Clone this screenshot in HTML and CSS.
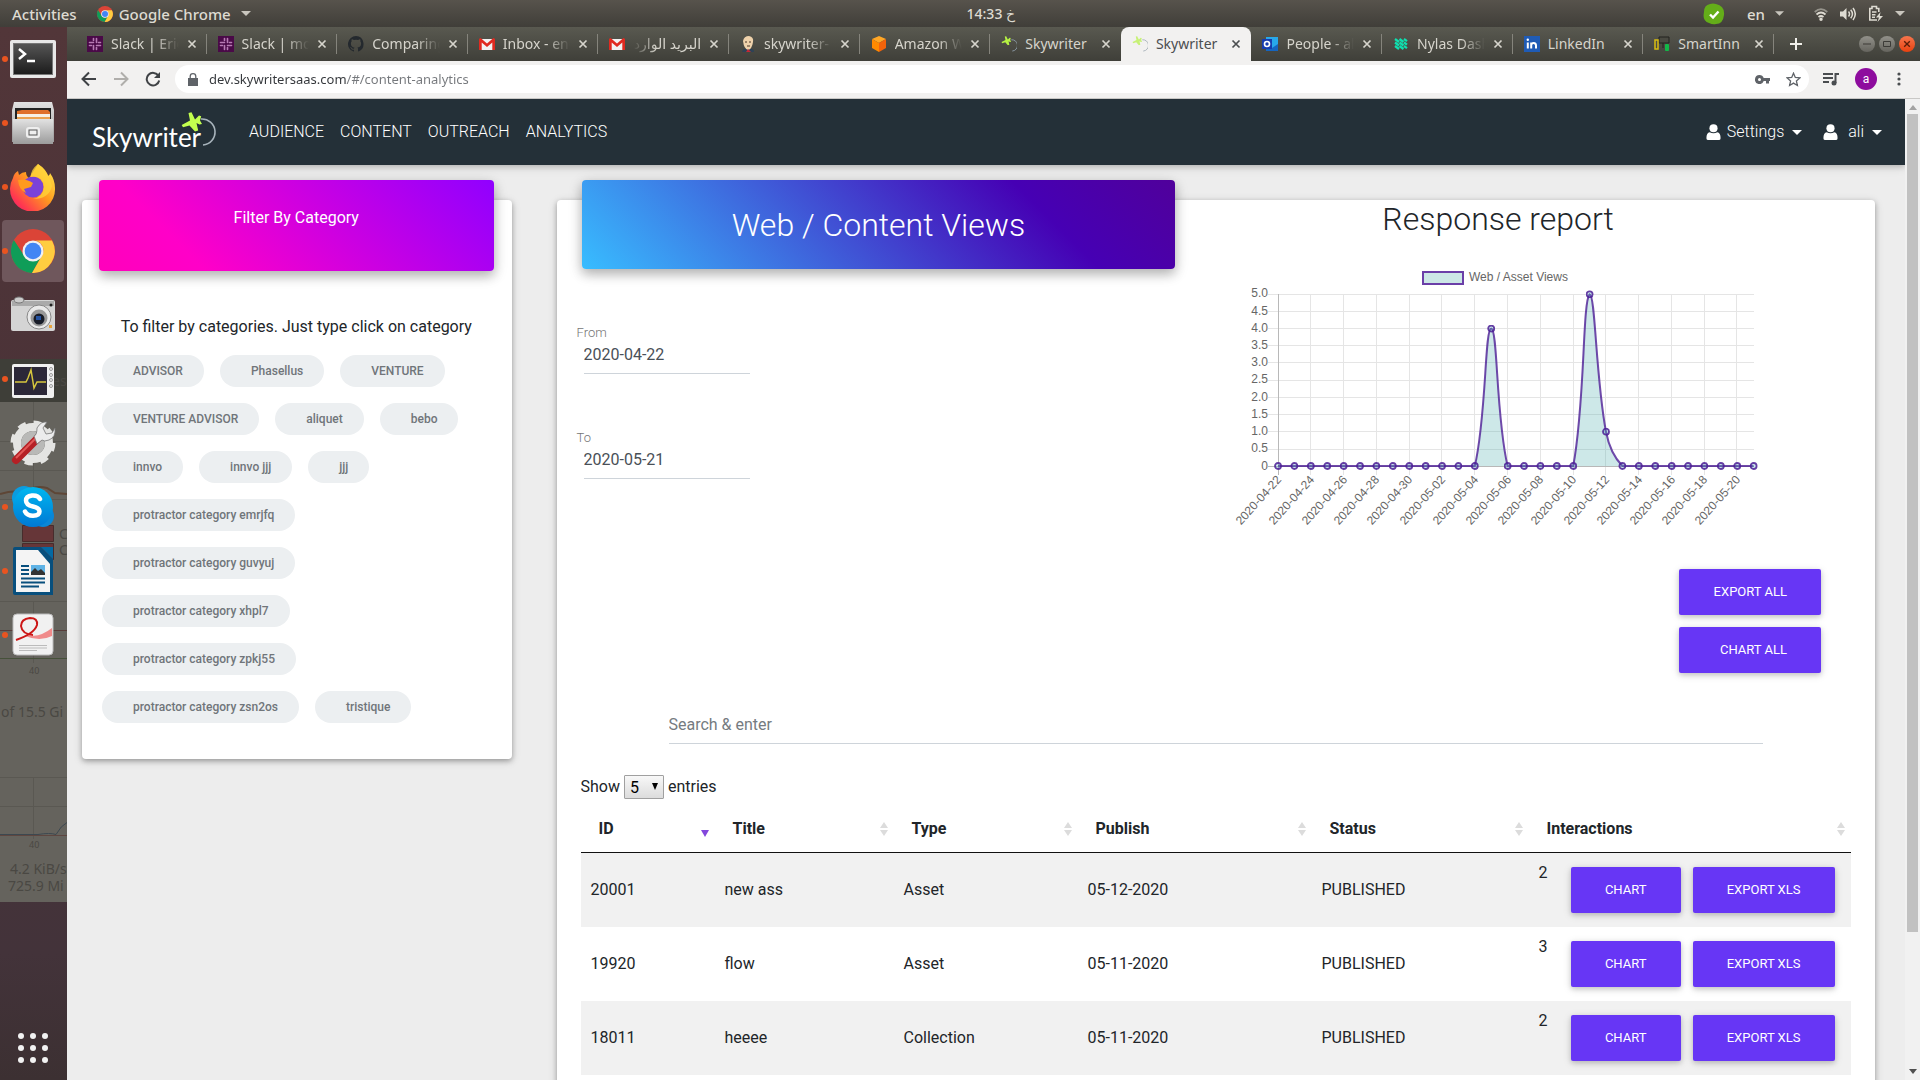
FILE: index.html
```html
<!DOCTYPE html>
<html lang="en">
<head>
<meta charset="utf-8">
<title>Skywriter</title>
<link rel="stylesheet" href="styles.css">
</head>
<body>
<svg class="defs" aria-hidden="true">
  <defs>
    <linearGradient id="g-metal" x1="0" y1="0" x2="0" y2="1"><stop offset="0" stop-color="#e2e2e2"/><stop offset="1" stop-color="#9b9b9b"/></linearGradient>
    <linearGradient id="g-screen" x1="0" y1="0" x2="0" y2="1"><stop offset="0" stop-color="#555"/><stop offset="1" stop-color="#1c1c1c"/></linearGradient>
    <linearGradient id="g-fox" x1="1" y1="0" x2="0" y2="1"><stop offset="0" stop-color="#fff44f"/><stop offset=".45" stop-color="#ff9a1f"/><stop offset=".8" stop-color="#ff3750"/><stop offset="1" stop-color="#e5177b"/></linearGradient>
    <linearGradient id="g-skype" x1="0" y1="0" x2="0" y2="1"><stop offset="0" stop-color="#00b7f0"/><stop offset="1" stop-color="#0078d4"/></linearGradient>
    <symbol id="chrome" viewBox="0 0 44 44">
      <circle cx="22" cy="22" r="22" fill="#db4437"/>
      <path d="M2.900 11A22 22 0 0 0 21 44l9.500-17-8.500 5a10 10 0 0 1-9-5.500z" fill="#0f9d58"/>
      <path d="M41 11.500A22 22 0 0 1 21 44l9.700-17A10 10 0 0 0 22 11.500z" fill="#ffcd40"/>
      <circle cx="22" cy="22" r="10.500" fill="#f1f1f1"/><circle cx="22" cy="22" r="8.300" fill="#4285f4"/>
    </symbol>
    <symbol id="slack" viewBox="0 0 16 16"><path fill="#4a0a48" d="M0 0h16v16H0z"/><path d="M6.500 2.500v2M9.500 2.500v4M2.500 6.500h4M11.500 6.500h2M2.500 9.500h2M9.500 9.500h4M6.500 9.500v4M9.500 11.500v2" stroke="#b77bb4" stroke-width="1.600" stroke-linecap="round"/></symbol>
    <symbol id="gmail" viewBox="0 0 16 16"><path fill="#f2f2f2" d="M1 3h14v11H1z"/><path fill="#e02a20" d="M0 3.500Q0 2 1.600 2L8 7.500 14.400 2Q16 2 16 3.500V14h-2.700V6.500L8 11 2.700 6.500V14H0z"/></symbol>
    <symbol id="plane" viewBox="0 0 21 20"><path d="M.7 13 9 8.500 7.500 1 10.500.3 14 7.500 18 3.500 20.200 4.200 19 8.500 21 12 18.500 12.600 15.500 11 17.200 18.500 14 19.500 8.500 13.500 2 15.200z"/></symbol>
    <symbol id="skyfav" viewBox="0 0 17 17"><use href="#plane" width="11" height="10" x="0" y="0" fill="#b6f243"/><path d="M11 4a6 6 0 0 1 1 12" fill="none" stroke="#8b9aa5"/></symbol>
    <symbol id="person" viewBox="0 0 15 18"><circle cx="7.500" cy="4.500" r="4.300"/><path d="M0 15q0-5.500 3.500-6.200 4 2 8 0Q15 9.500 15 15q0 2-2 2H2q-2 0-2-2z"/></symbol>
    <symbol id="caret" viewBox="0 0 10 5"><path d="M0 0h10L5 5z"/></symbol>
    <symbol id="x" viewBox="0 0 10 10"><path d="M1.500 1.500l7 7m0-7l-7 7" stroke="currentColor" stroke-width="1.700"/></symbol>
    <symbol id="sort" viewBox="0 0 8 14"><path d="M4 0l4 6H0zM0 8h8l-4 6z"/></symbol>
  </defs>
</svg>

<header class="topbar">
  <button class="top-item">Activities</button>
  <button class="top-item top-app"><svg width="16" height="16"><use href="#chrome"/></svg>Google Chrome<svg class="fill" width="10" height="5"><use href="#caret"/></svg></button>
  <span class="clock">14:33 خ</span>
  <div class="tray">
    <svg width="22" height="22" viewBox="0 0 22 22"><path d="M7 1q3-1 6 0 9 2 8 11-1 9-8 9-3 1-7-1Q-1 18 1 9q0-7 6-8z" fill="#64ad19"/><path d="M7 11.500l3 3 5.500-6" fill="none" stroke="#fff" stroke-width="2.400"/></svg>
    <button class="top-item lang">en<svg class="fill" width="9" height="5"><use href="#caret"/></svg></button>
    <svg width="14" height="14" viewBox="0 0 14 14" fill="none" stroke="#dedbd2" stroke-width="1.700"><path d="M.7 5Q7-.7 13.300 5" opacity=".5"/><path d="M2.500 7.500q4.500-4 9 0M4.500 10q2.500-2 5 0"/><circle cx="7" cy="12.200" r=".9"/></svg>
    <svg width="16" height="14" viewBox="0 0 16 14" fill="none" stroke="#dedbd2" stroke-width="1.500"><path d="M0 4.500h3L6.500 1v12L3 9.500H0z" fill="#dedbd2" stroke="none"/><path d="M8.500 4.500q2 2.500 0 5M10.700 2.700q3.500 4.300 0 8.600M13 1q4.500 6 0 12"/></svg>
    <svg width="15" height="17" viewBox="0 0 15 17" fill="none" stroke="#dedbd2" stroke-width="1.600"><path d="M9 15H1.800V3.500H4V1.500h4.500v2h2.300V7M4 7h4.500M4 9.700h3.500M4 12.300h3"/><path d="M12.500 7L8 12.500h3L9.500 17 15 11h-3.200z" fill="#dedbd2" stroke="none"/></svg>
    <svg class="fill" width="10" height="5"><use href="#caret"/></svg>
  </div>
</header>

<div class="desktop">
  <nav class="dock" aria-label="Dock">
    <svg class="dock-back" width="67" height="1053" viewBox="0 27 67 1053" aria-hidden="true">
      <path fill="#3e3e38" d="M0 359h67v43H0z"/><path fill="#65635d" d="M0 402h67v500H0z"/>
      <path d="M0 441.500h67M0 470.500h67M0 499.500h67M33.500 402v97M0 601.500h67M33.500 601v62M0 777.500h67M0 806.500h67M33.500 777v62" stroke="#5a5852" fill="none"/>
      <path d="M0 494q12-4 25-2 10-7 22-4l8 5 12 1" stroke="#5e4636" stroke-width="2" fill="none"/><path d="M0 630.500h67" stroke="#583c39"/><path d="M0 658.500h67" stroke="#46513a"/>
      <path d="M22.500 525.500h31v16h-31zM22.500 543.500h31v16h-31z" fill="#663638" stroke="#472c2c"/>
      <path d="M0 834.500h38q12-2 18 0 5-9 11-12" stroke="#3c4850" fill="none"/><path d="M0 835.500h67" stroke="#5e4640"/>
      <g class="back-text"><text x="52" y="386">es</text><text x="59" y="539">C</text><text x="59" y="555">C</text><text x="1" y="717">of 15.5 Gi</text><text x="10" y="874">4.2 KiB/s</text><text x="8" y="891">725.9 Mi</text></g>
      <g class="back-small"><text x="29" y="674">40</text><text x="29" y="848">40</text></g>
    </svg>
    <button class="dock-item run" aria-label="Terminal"><svg width="48" height="48" viewBox="0 0 48 48"><rect x="1" y="5" width="46" height="38" rx="2" fill="#e8e8e8"/><rect x="4" y="8" width="40" height="32" fill="#777"/><rect x="5" y="9" width="38" height="30" fill="url(#g-screen)"/><path d="M10 14l6 5-6 5M18 26h8" stroke="#fff" stroke-width="2.500" fill="none"/></svg></button>
    <button class="dock-item run" aria-label="Files"><svg width="48" height="48" viewBox="0 0 48 48"><path d="M5 3h38l2 8v32H3V11z" fill="url(#g-metal)"/><path d="M6 9h36v12H6z" fill="#222"/><path d="M8 12l5-1h26l2 2v8H8z" fill="#e0702a"/><path d="M8 15h33v5H8z" fill="#f7f0e4"/><path d="M8 18h33v3H8z" fill="#eba250"/><path d="M4 20h40v25H4z" fill="url(#g-metal)"/><rect x="17" y="28" width="14" height="11" rx="3" fill="#eee"/><rect x="20" y="31" width="8" height="5" fill="#eee" stroke="#555"/></svg></button>
    <button class="dock-item run" aria-label="Firefox"><svg width="48" height="48" viewBox="0 0 48 48"><path d="M29 1q8 5 10 12 2-1 2-3 5 7 5 15A22.500 22.500 0 1 1 4 15q1-5 5-7l1 4q3-3 7-3 0 4 3 6z" fill="url(#g-fox)"/><circle cx="24" cy="24" r="10.500" fill="#7b42d8"/><path d="M29 1q-8 6-7 13 12-2 13 10-1 10-11 12 16 0 19-13-3-14-14-22z" fill="#ffd43b" opacity=".75"/><path d="M9 17q8-2 15 3l-2 4-7 2 2 4q-7-3-8-13z" fill="#ff9a1f"/></svg></button>
    <button class="dock-item run current" aria-label="Google Chrome"><svg width="44" height="44"><use href="#chrome"/></svg></button>
    <button class="dock-item" aria-label="Camera"><svg width="48" height="48" viewBox="0 0 48 48"><rect x="2" y="9" width="44" height="31" rx="2" fill="#d4d4d4"/><path d="M3 10h42v5H3z" fill="#aaa"/><ellipse cx="10" cy="9" rx="5" ry="3" fill="#ccc" stroke="#777"/><circle cx="30" cy="26" r="12" fill="#e9e9e9" stroke="#888"/><circle cx="30" cy="27" r="8.500" fill="#999"/><circle cx="30" cy="28" r="5.500" fill="#181c28"/><rect x="27" y="25" width="5" height="4" fill="#2452a0"/><circle cx="42" cy="14" r="1.500" fill="#222"/><path d="M40 34h3v3h-3z" fill="#e8a33b"/></svg></button>
    <button class="dock-item run" aria-label="System Monitor"><svg width="48" height="48" viewBox="0 0 48 48"><rect x="3" y="9" width="42" height="34" rx="2" fill="#f0f0f0"/><rect x="5" y="12" width="33" height="28" fill="#2c2838"/><path d="M6 27h11l2-4 3-8 3 18 3-6h9" stroke="#d6c63e" stroke-width="1.500" fill="none"/><g fill="none" stroke="#999"><circle cx="42" cy="14" r="1.500"/><circle cx="42" cy="20" r="1.500"/><circle cx="42" cy="25" r="1.500"/><circle cx="42" cy="31" r="1.500"/></g></svg></button>
    <button class="dock-item" aria-label="Settings"><svg width="48" height="48" viewBox="0 0 48 48"><circle cx="24" cy="24" r="16" fill="none" stroke="#e4e4e2" stroke-width="8"/><circle cx="24" cy="24" r="20" fill="none" stroke="#e4e4e2" stroke-width="5" stroke-dasharray="8 7.700"/><circle cx="24" cy="24" r="12" fill="#b9b9b7"/><path d="M7 41L29 19" stroke="#b52025" stroke-width="8" stroke-linecap="round"/><path d="M7 39L27 19" stroke="#e25757" stroke-width="2"/><path d="M25 17q3-1 3-8 4-7 10-6l-4 6 3 6 6-1 3-5q1 9-6 12-5 2-7 0l-5 4z" fill="#ececec" stroke="#777" stroke-width=".8"/></svg></button>
    <button class="dock-item run" aria-label="Skype"><svg width="48" height="48" viewBox="0 0 48 48"><circle cx="15" cy="15" r="12" fill="#0b9ce0"/><circle cx="34" cy="33" r="11" fill="#0a86d6"/><circle cx="24" cy="24" r="20" fill="url(#g-skype)"/><path d="M31 16q-2-4-8-3.500-6 .8-6 5 0 4.500 7 6 6.500 1.500 6.500 5 0 4-6.500 4.200-6 0-8-4.200" fill="none" stroke="#fff" stroke-width="4.500" stroke-linecap="round"/></svg></button>
    <button class="dock-item run" aria-label="Writer"><svg width="48" height="48" viewBox="0 0 48 48"><path d="M6 0h26l12 12v36H6q-2 0-2-2V2q0-2 2-2z" fill="#084f7d"/><path d="M7 3h22l12 14v28H7z" fill="#f4f4f4"/><path d="M32 0h12v12z" fill="#0369a3"/><path d="M12 19h8M12 23h8M12 27h8M12 31.500h24M12 35.500h24M12 39.500h18" stroke="#084f7d" stroke-width="2"/><path d="M22 18h14v10H22z" fill="#5fb3e6"/><path d="M22 28v-3l4-4 3 3 3-2 4 4v2z" fill="#333"/></svg></button>
    <button class="dock-item run" aria-label="Document Viewer"><svg width="48" height="48" viewBox="0 0 48 48"><rect x="4" y="3" width="40" height="41" rx="4" fill="#f1f1f1" stroke="#bbb"/><path d="M20 24q10 3 23-7v8q-12 6-27 0z" fill="#f08a8a"/><path d="M7 29q18-6 21-15 1-7-7-7-9 1-9 8 1 8 12 9" fill="none" stroke="#cc1717" stroke-width="2"/><path d="M10 34.500h28M10 37h28M10 39.500h18" stroke="#bbb"/></svg></button>
    <button class="dock-item apps" aria-label="Show Applications"><svg width="32" height="32" viewBox="0 0 32 32" fill="#f2f2f2"><circle cx="4" cy="4" r="3"/><circle cx="16" cy="4" r="3"/><circle cx="28" cy="4" r="3"/><circle cx="4" cy="16" r="3"/><circle cx="16" cy="16" r="3"/><circle cx="28" cy="16" r="3"/><circle cx="4" cy="28" r="3"/><circle cx="16" cy="28" r="3"/><circle cx="28" cy="28" r="3"/></svg></button>
  </nav>

  <div class="browser">
    <div class="tabs">
      <div class="tab-list">
      <div class="tab"><svg width="16" height="16"><use href="#slack"/></svg><span class="tab-title fade">Slack | Eric</span><button class="tab-close" aria-label="Close tab"><svg width="10" height="10"><use href="#x"/></svg></button></div>
      <div class="tab"><svg width="16" height="16"><use href="#slack"/></svg><span class="tab-title fade">Slack | mob</span><button class="tab-close" aria-label="Close tab"><svg width="10" height="10"><use href="#x"/></svg></button></div>
      <div class="tab"><svg width="16" height="16" viewBox="0 0 16 16"><path fill="#24292e" d="M8 0a8 8 0 0 0-2.500 15.600c.4 0 .5-.2.500-.4v-1.500c-2.200.5-2.700-1-2.700-1-.4-.9-.9-1.200-.9-1.200-.7-.5.1-.5.1-.5.800.1 1.200.8 1.200.8.700 1.300 1.900.9 2.300.7.100-.5.300-.9.500-1.100-1.800-.2-3.600-.9-3.600-4 0-.9.300-1.600.8-2.100-.1-.2-.4-1 .1-2.100 0 0 .7-.2 2.200.8a7.500 7.500 0 0 1 4 0c1.500-1 2.200-.8 2.200-.8.400 1.100.2 1.900.1 2.100.5.600.8 1.300.8 2.100 0 3.100-1.900 3.700-3.700 3.900.3.300.6.800.6 1.500v2.200c0 .2.100.5.500.4A8 8 0 0 0 8 0z"/></svg><span class="tab-title fade">Comparing</span><button class="tab-close" aria-label="Close tab"><svg width="10" height="10"><use href="#x"/></svg></button></div>
      <div class="tab"><svg width="16" height="16"><use href="#gmail"/></svg><span class="tab-title fade">Inbox - eng</span><button class="tab-close" aria-label="Close tab"><svg width="10" height="10"><use href="#x"/></svg></button></div>
      <div class="tab"><svg width="16" height="16"><use href="#gmail"/></svg><span class="tab-title fade-rtl" dir="rtl">البريد الوارد</span><button class="tab-close" aria-label="Close tab"><svg width="10" height="10"><use href="#x"/></svg></button></div>
      <div class="tab"><svg width="16" height="16" viewBox="0 0 16 16"><path d="M2 16q1-4 6-3 6-1 6 3z" fill="#2d4256"/><path d="M3 5q1-5 6-5 5 1 4 6-1 7-5 8-4-1-5-9z" fill="#efd2ab"/><path d="M8 13l3 3H6z" fill="#c22835"/><path d="M5 6h2m2 0h2M7 10h3" stroke="#4b3726"/></svg><span class="tab-title fade">skywriter-</span><button class="tab-close" aria-label="Close tab"><svg width="10" height="10"><use href="#x"/></svg></button></div>
      <div class="tab"><svg width="16" height="16" viewBox="0 0 16 16"><path d="M8 0l7 3-7 4-7-4z" fill="#ffa726"/><path d="M1 3l7 4v9l-7-4z" fill="#ff8a00"/><path d="M15 3L8 7v9l7-4z" fill="#f4630a"/></svg><span class="tab-title fade">Amazon W</span><button class="tab-close" aria-label="Close tab"><svg width="10" height="10"><use href="#x"/></svg></button></div>
      <div class="tab before-active"><svg width="16" height="16"><use href="#skyfav"/></svg><span class="tab-title">Skywriter</span><button class="tab-close" aria-label="Close tab"><svg width="10" height="10"><use href="#x"/></svg></button></div>
      <div class="tab active"><svg width="16" height="16" opacity=".7"><use href="#skyfav"/></svg><span class="tab-title">Skywriter</span><button class="tab-close" aria-label="Close tab"><svg width="10" height="10"><use href="#x"/></svg></button></div>
      <div class="tab"><svg width="16" height="16" viewBox="0 0 16 16"><path fill="#28a8ea" d="M4 1h12v14H4z"/><path fill="#1565c0" d="M4 8l6 4 6-4v7H4z"/><path fill="#173dae" d="M0 3h10v10H0z"/><circle cx="5" cy="8" r="2.500" fill="none" stroke="#fff" stroke-width="1.600"/></svg><span class="tab-title fade">People - ali</span><button class="tab-close" aria-label="Close tab"><svg width="10" height="10"><use href="#x"/></svg></button></div>
      <div class="tab"><svg width="16" height="16" viewBox="0 0 16 16"><path d="M2 3l4 3M6.500 3l4 3M11 3l3 2.200M2 6.500l4 3M6.500 6.500l4 3M11 6.500l3 2.200M2 10l4 3M6.500 10l4 3M11 10l3 2.200" stroke="#0fe0b0" stroke-width="2.200"/></svg><span class="tab-title fade">Nylas Dash</span><button class="tab-close" aria-label="Close tab"><svg width="10" height="10"><use href="#x"/></svg></button></div>
      <div class="tab"><svg width="16" height="16" viewBox="0 0 16 16"><path fill="#1f5bb5" d="M0 0h16v16H0z"/><path d="M3.800 6.500v6M7.200 6.500v6M7.200 9q.3-2 2.500-2 2.300 0 2.300 2.500v3" stroke="#fff" stroke-width="2" fill="none"/><circle cx="3.800" cy="3.800" r="1.200" fill="#fff"/></svg><span class="tab-title">LinkedIn</span><button class="tab-close" aria-label="Close tab"><svg width="10" height="10"><use href="#x"/></svg></button></div>
      <div class="tab"><svg width="16" height="16" viewBox="0 0 16 16"><path d="M5 1h10v6H5z" fill="#4a4a42" stroke="#22221e"/><path d="M4 4H1v9h3z" fill="none" stroke="#d9bd10" stroke-width="1.500"/><path d="M9 7v5" stroke="#22221e"/><rect x="11" y="8" width="4" height="7" rx="1" fill="#12b848"/></svg><span class="tab-title">SmartInn</span><button class="tab-close" aria-label="Close tab"><svg width="10" height="10"><use href="#x"/></svg></button></div>
      </div>
      <button class="new-tab" aria-label="New tab"><svg width="12" height="12" viewBox="0 0 12 12"><path d="M6 0v12M0 6h12" stroke="#f0efea" stroke-width="2"/></svg></button>
      <div class="window-controls">
        <button aria-label="Minimise"><svg width="8" height="8" viewBox="0 0 8 8"><path d="M0 4h8" stroke="#3c3b37"/></svg></button>
        <button aria-label="Restore"><svg width="8" height="8" viewBox="0 0 8 8"><path d="M.5 1.500h7v5h-7z" fill="none" stroke="#3c3b37"/></svg></button>
        <button class="close" aria-label="Close"><svg width="8" height="8"><use href="#x"/></svg></button>
      </div>
    </div>

    <div class="toolbar">
      <button class="tool" aria-label="Back"><svg width="16" height="16" viewBox="0 0 16 16" fill="none" stroke="#3f4245" stroke-width="2"><path d="M15 8H2M8 1.500L1.500 8 8 14.500"/></svg></button>
      <button class="tool" aria-label="Forward"><svg width="16" height="16" viewBox="0 0 16 16" fill="none" stroke="#b0aeab" stroke-width="2"><path d="M1 8h13M8 1.500L14.500 8 8 14.500"/></svg></button>
      <button class="tool" aria-label="Reload"><svg width="16" height="16" viewBox="0 0 16 16"><path d="M13.500 5A6.300 6.300 0 1 0 14.200 9.500" fill="none" stroke="#3f4245" stroke-width="2"/><path d="M15 1v6H9z" fill="#3f4245"/></svg></button>
      <div class="omnibox">
        <svg width="10" height="13" viewBox="0 0 10 13"><path d="M0 5h10v8H0z" fill="#5f6368"/><path d="M2.200 5V3.500a2.800 2.800 0 0 1 5.600 0V5" fill="none" stroke="#5f6368" stroke-width="1.300"/></svg>
        <input class="url" type="text" aria-label="Address" value="dev.skywritersaas.com/#/content-analytics">
        <svg width="15" height="9" viewBox="0 0 15 9"><path fill="#5f6368" fill-rule="evenodd" d="M4.500 0a4.500 4.500 0 0 1 4.200 3H15v3h-1v2.500h-3V6H8.700A4.500 4.500 0 1 1 4.500 0zm0 3a1.500 1.500 0 1 0 0 3 1.500 1.500 0 0 0 0-3z"/></svg>
        <svg width="15" height="15" viewBox="0 0 15 15"><path d="M7.500 1.200l1.800 4.300 4.600.4-3.500 3 1 4.600-3.900-2.400-3.900 2.400 1-4.600-3.500-3 4.600-.4z" fill="none" stroke="#5f6368" stroke-width="1.300"/></svg>
      </div>
      <svg width="16" height="14" viewBox="0 0 16 14"><path d="M0 2h10M0 6h10M0 10h6" stroke="#4a4d50" stroke-width="2"/><path d="M12.500 11V2H16" fill="none" stroke="#4a4d50" stroke-width="2"/><circle cx="11" cy="11" r="2.500" fill="#4a4d50"/></svg>
      <button class="avatar">a</button>
      <button class="menu" aria-label="Menu"><svg width="4" height="14" viewBox="0 0 4 14" fill="#4a4d50"><circle cx="2" cy="2" r="1.600"/><circle cx="2" cy="7" r="1.600"/><circle cx="2" cy="12" r="1.600"/></svg></button>
    </div>

    <div class="viewport">
      <div class="page">
        <nav class="navbar">
          <a class="logo" href="#" aria-label="Skywriter home"><svg width="125" height="46" viewBox="0 0 125 46"><text x="0" y="38" class="logo-text">Skywriter</text><use href="#plane" x="89" y="3" width="21" height="20" fill="#c3ff4e"/><path d="M109 10a13 13 0 0 1 2 26" fill="none" stroke="#a7b3bb" stroke-width="1.600"/></svg></a>
          <a class="nav-link" href="#">AUDIENCE</a>
          <a class="nav-link" href="#">CONTENT</a>
          <a class="nav-link" href="#">OUTREACH</a>
          <a class="nav-link" href="#">ANALYTICS</a>
          <a class="nav-link nav-user push" href="#"><svg width="15" height="17"><use href="#person"/></svg>Settings<svg class="nav-caret" width="10" height="5"><use href="#caret"/></svg></a>
          <a class="nav-link nav-user" href="#"><svg width="15" height="17"><use href="#person"/></svg><span class="user-name">ali</span><svg class="nav-caret" width="10" height="5"><use href="#caret"/></svg></a>
        </nav>
        <div class="content">
          <aside class="side">
            <div class="card side-card">
              <div class="banner banner-pink">Filter By Category</div>
              <p class="hint">To filter by categories. Just type click on category</p>
              <div class="chips">
                <button class="chip">ADVISOR</button><button class="chip">Phasellus</button><button class="chip">VENTURE</button><button class="chip">VENTURE ADVISOR</button><button class="chip">aliquet</button><button class="chip">bebo</button><button class="chip">innvo</button><button class="chip">innvo jjj</button><button class="chip">jjj</button><button class="chip">protractor category emrjfq</button><button class="chip">protractor category guvyuj</button><button class="chip">protractor category xhpl7</button><button class="chip">protractor category zpkj55</button><button class="chip">protractor category zsn2os</button><button class="chip">tristique</button>
              </div>
            </div>
          </aside>
          <main class="main">
            <div class="card main-card">
              <div class="report">
                <div>
                  <h1 class="banner banner-blue">Web / Content Views</h1>
                  <div class="dates">
                    <div class="field"><label for="from">From</label><input id="from" type="text" value="2020-04-22"></div>
                    <div class="field"><label for="to">To</label><input id="to" type="text" value="2020-05-21"></div>
                  </div>
                </div>
                <div class="response">
                  <h2>Response report</h2>
                  <svg class="chart" viewBox="0 0 528 270" role="img" aria-label="Web / Asset Views by day">
                    <defs><marker id="dot" markerWidth="8" markerHeight="8" refX="4" refY="4" markerUnits="userSpaceOnUse"><circle cx="4" cy="4" r="3" fill="#4bc0c0" fill-opacity=".25" stroke="#4c1d95" stroke-opacity=".85" stroke-width="1.800"/></marker></defs>
                    <rect x="189" y="10" width="40" height="12" fill="#cce7e6" stroke="#6b3fa8" stroke-width="2"/>
                    <text class="tick" x="235" y="19">Web / Asset Views</text>
                    <path d="M34 32.500h486M34 49.500h486M34 66.500h486M34 83.500h486M34 100.500h486M34 118.500h486M34 135.500h486M34 152.500h486M34 169.500h486M34 187.500h486M76.500 32v181M109.500 32v181M142.500 32v181M175.500 32v181M207.500 32v181M240.500 32v181M273.500 32v181M306.500 32v181M339.500 32v181M371.500 32v181M404.500 32v181M437.500 32v181M470.500 32v181M502.500 32v181" stroke="#e5e5e5" fill="none"/>
                    <path d="M44.500 32v181M34 204.500h486" stroke="#b8b8b8" fill="none"/>
                    <path d="M240.800 204C252.500 154.900 250.600 66.600 257.200 66.600S261.900 154.900 273.600 204zM339.200 204C351.200 141.300 348.300 39.900 355.600 32.300 361.400 32.300 361.700 115.800 372 169.700 374.800 184.500 379.200 194.400 388.400 204z" fill="#4bacac" fill-opacity=".28"/>
                    <path d="M44 204H60.400 76.800 93.200 109.600 126 142.400 158.800 175.200 191.600 208 224.400 240.800C252.500 154.900 250.600 66.600 257.200 66.600S261.900 154.900 273.600 204H290 306.400 322.800 339.200C351.200 141.300 348.300 39.900 355.600 32.300 361.400 32.300 361.700 115.800 372 169.700 374.800 184.500 379.200 194.400 388.400 204H404.800 421.200 437.600 454 470.400 486.800 503.200 519.600" fill="none" stroke="#4c1d95" stroke-opacity=".8" stroke-width="2" marker-start="url(#dot)" marker-mid="url(#dot)" marker-end="url(#dot)"/>
                    <g class="tick end"><text x="34" y="35">5.0</text><text x="34" y="53">4.5</text><text x="34" y="70">4.0</text><text x="34" y="87">3.5</text><text x="34" y="104">3.0</text><text x="34" y="121">2.5</text><text x="34" y="139">2.0</text><text x="34" y="156">1.5</text><text x="34" y="173">1.0</text><text x="34" y="190">0.5</text><text x="34" y="208">0</text></g>
                    <g class="tick end"><text transform="translate(48 218) rotate(-48)">2020-04-22</text><text transform="translate(81 218) rotate(-48)">2020-04-24</text><text transform="translate(114 218) rotate(-48)">2020-04-26</text><text transform="translate(146 218) rotate(-48)">2020-04-28</text><text transform="translate(179 218) rotate(-48)">2020-04-30</text><text transform="translate(212 218) rotate(-48)">2020-05-02</text><text transform="translate(245 218) rotate(-48)">2020-05-04</text><text transform="translate(278 218) rotate(-48)">2020-05-06</text><text transform="translate(310 218) rotate(-48)">2020-05-08</text><text transform="translate(343 218) rotate(-48)">2020-05-10</text><text transform="translate(376 218) rotate(-48)">2020-05-12</text><text transform="translate(409 218) rotate(-48)">2020-05-14</text><text transform="translate(442 218) rotate(-48)">2020-05-16</text><text transform="translate(474 218) rotate(-48)">2020-05-18</text><text transform="translate(507 218) rotate(-48)">2020-05-20</text></g>
                  </svg>
                </div>
              </div>
              <div class="bulk"><button class="btn wide">EXPORT ALL</button><button class="btn wide">CHART ALL</button></div>
              <input class="search" type="search" aria-label="Search" placeholder="Search &amp; enter">
              <label class="length">Show <span class="select"><select><option>5</option><option>10</option><option>25</option></select><svg width="6" height="7" viewBox="0 0 6 7"><path d="M0 0h6L3 7z"/></svg></span> entries</label>
              <table class="data">
                <colgroup><col class="c-id"><col class="c-title"><col class="c-type"><col class="c-publish"><col class="c-status"><col></colgroup>
                <thead><tr>
                  <th><div class="th">ID<svg class="sorted" width="8" height="14" viewBox="0 0 8 14"><path d="M0 8h8l-4 7z"/></svg></div></th>
                  <th><div class="th">Title<svg width="8" height="14"><use href="#sort"/></svg></div></th>
                  <th><div class="th">Type<svg width="8" height="14"><use href="#sort"/></svg></div></th>
                  <th><div class="th">Publish<svg width="8" height="14"><use href="#sort"/></svg></div></th>
                  <th><div class="th">Status<svg width="8" height="14"><use href="#sort"/></svg></div></th>
                  <th><div class="th">Interactions<svg width="8" height="14"><use href="#sort"/></svg></div></th>
                </tr></thead>
                <tbody>
                  <tr><td>20001</td><td>new ass</td><td>Asset</td><td>05-12-2020</td><td>PUBLISHED</td><td><div class="actions"><span class="count">2</span><button class="btn">CHART</button><button class="btn wide">EXPORT XLS</button></div></td></tr>
                  <tr><td>19920</td><td>flow</td><td>Asset</td><td>05-11-2020</td><td>PUBLISHED</td><td><div class="actions"><span class="count">3</span><button class="btn">CHART</button><button class="btn wide">EXPORT XLS</button></div></td></tr>
                  <tr><td>18011</td><td>heeee</td><td>Collection</td><td>05-11-2020</td><td>PUBLISHED</td><td><div class="actions"><span class="count">2</span><button class="btn">CHART</button><button class="btn wide">EXPORT XLS</button></div></td></tr>
                </tbody>
              </table>
            </div>
          </main>
        </div>
      </div>
      <div class="scrollbar" aria-hidden="true"><svg width="8" height="5" viewBox="0 0 8 5"><path d="M0 5h8L4 0z" fill="#a3a3a3"/></svg><div class="track"><div class="thumb"></div></div><svg width="8" height="5" viewBox="0 0 8 5"><path d="M0 0h8L4 5z" fill="#505050"/></svg></div>
    </div>
  </div>
</div>
</body>
</html>
```
FILE: styles.css
```css
* { box-sizing: border-box; }
body {
  margin: 0;
  height: 100vh;
  overflow: hidden;
  display: flex;
  flex-direction: column;
  font: 400 16px/24px Roboto, "Liberation Sans", sans-serif;
  color: #212529;
}
button { border: 0; padding: 0; background: none; font: inherit; color: inherit; cursor: pointer; }
input, select { font: inherit; border-radius: 0; outline: 0; }
svg { display: block; flex: none; }
a { color: inherit; text-decoration: none; }
.defs { position: absolute; width: 0; height: 0; }
.fill { fill: #c9c6be; }

/* system bar */
.topbar {
  flex: none;
  height: 27px;
  display: grid;
  grid-template-columns: minmax(0, 1fr) minmax(0, 3fr) auto minmax(0, 4fr);
  grid-template-columns: auto 1fr auto 1fr;
  align-items: center;
  padding: 0 15px 0 12px;
  background: linear-gradient(#57534c, #403e39);
  color: #dedbd2;
  font: 500 15px/20px "Noto Sans", "DejaVu Sans", sans-serif;
}
.top-item { display: flex; align-items: center; gap: 10px; }
.top-app { margin-left: 20px; gap: 6px; }
.top-app .fill { margin-left: 4px; }
.clock { font-size: 14px; }
.tray { display: flex; align-items: center; justify-content: flex-end; gap: 12px; }
.lang { margin: 0 18px 0 10px; }

.desktop { flex: 1; min-height: 0; display: flex; }

/* dock */
.dock {
  flex: none;
  width: 67px;
  position: relative;
  display: flex;
  flex-direction: column;
  gap: 2px;
  padding: 1px 2px;
  overflow: hidden;
  background: linear-gradient(#523639, #4b3338 35%, #43333a 88%, #3c3032);
}
.dock-back { position: absolute; left: 0; top: 0; }
.back-text { font: 14px "Noto Sans", sans-serif; fill: #4a4843; }
.back-small { font: 9px "Noto Sans", sans-serif; fill: #4a4843; }
.dock-item {
  flex: none;
  position: relative;
  width: 62px;
  height: 62px;
  display: grid;
  place-items: center;
  border-radius: 4px;
}
.current { background: #6f575c; }
.run::before {
  content: "";
  position: absolute;
  left: 0;
  top: 28px;
  width: 6px;
  height: 6px;
  border-radius: 50%;
  background: #e95420;
}
.apps { margin-top: auto; }

/* browser chrome */
.browser { flex: 1; min-width: 0; display: flex; flex-direction: column; }
.tabs {
  flex: none;
  height: 34px;
  display: flex;
  padding-left: 9px;
  background: linear-gradient(#595950, #3f3f39);
  color: #d6d4cc;
  font: 400 14px/20px "Noto Sans", "DejaVu Sans", sans-serif;
}
.tab-list { flex: 0 1 1698px; min-width: 0; display: flex; }
.tab {
  flex: 1;
  min-width: 0;
  display: flex;
  align-items: center;
  gap: 8px;
  padding: 0 10px 0 11px;
  position: relative;
}
.tab::after {
  content: "";
  position: absolute;
  right: 0;
  top: 7px;
  width: 1px;
  height: 20px;
  background: #85847c;
}
.before-active::after, .active::after { display: none; }
.active { background: #f2f1f0; color: #4b4e50; border-radius: 8px 8px 0 0; }
.tab-title { flex: 1; min-width: 0; overflow: hidden; white-space: nowrap; }
.fade { -webkit-mask: linear-gradient(90deg, #000 65%, transparent); mask: linear-gradient(90deg, #000 65%, transparent); }
.fade-rtl { -webkit-mask: linear-gradient(270deg, #000 65%, transparent); mask: linear-gradient(270deg, #000 65%, transparent); }
.new-tab { padding: 0 16px; }
.window-controls { margin-left: auto; display: flex; align-items: center; gap: 4px; padding-right: 5px; }
.window-controls button {
  width: 16px;
  height: 16px;
  display: grid;
  place-items: center;
  border-radius: 50%;
  background: linear-gradient(#92918a, #65645e);
  color: #5a1d08;
}
.window-controls .close { background: linear-gradient(#f6764d, #e8410f); }
.toolbar {
  flex: none;
  height: 38px;
  display: flex;
  align-items: center;
  gap: 16px;
  padding: 0 19px 1px 14px;
  background: #f2f1f0;
  border-bottom: 1px solid #c9c8c6;
}
.omnibox {
  flex: 1;
  height: 28px;
  display: flex;
  align-items: center;
  gap: 16px;
  margin: 0 -2px 0 -2px;
  padding: 0 8px 0 13px;
  border-radius: 14px;
  background: #fff;
}
.url {
  flex: 1;
  min-width: 0;
  border: 0;
  padding: 0;
  margin-left: -5px;
  font: 400 13px/20px "Noto Sans", "DejaVu Sans", sans-serif;
  color: transparent;
  caret-color: #33363a;
  background: linear-gradient(90deg, #33363a 137px, #75787c 137px);
  -webkit-background-clip: text;
  background-clip: text;
}
.avatar { width: 22px; height: 22px; border-radius: 50%; background: #8e0c9e; color: #fff; font-size: 12px; line-height: 20px; }
.menu { margin-left: 4px; }

/* page */
.viewport { flex: 1; min-height: 0; display: flex; background: #ededed; }
.page { flex: 1; min-width: 0; overflow: hidden; }
.scrollbar {
  flex: none;
  width: 15px;
  display: flex;
  flex-direction: column;
  align-items: center;
  padding: 6px 0;
  gap: 4px;
  background: #f1f1f1;
}
.track { flex: 1; width: 11px; }
.thumb { height: 86%; background: #c1c1c1; }
.navbar {
  position: relative;
  z-index: 1;
  height: 66px;
  display: flex;
  align-items: center;
  gap: 16px;
  padding: 0 23px 0 25px;
  background: #243038;
  color: #fff;
  font-weight: 300;
  box-shadow: 0 2px 5px rgba(0, 0, 0, .16), 0 2px 10px rgba(0, 0, 0, .12);
}
.logo { margin-right: 16px; }
.logo-text { font: 400 26px Lato, sans-serif; fill: #fff; }
.nav-user { display: flex; align-items: center; gap: 6px; fill: #fff; }
.nav-user + .nav-user { margin-left: 5px; }
.nav-caret { margin-left: 2px; }
.user-name { margin-left: 4px; }
.push { margin-left: auto; }
.content { display: grid; grid-template-columns: minmax(0, 1fr) minmax(0, 3fr); align-items: start; padding-top: 35px; }
.side { padding: 0 15px; }
.main { padding: 0 30px; }
.card { display: flow-root; background: #fff; border-radius: 4px; box-shadow: 0 2px 5px rgba(0, 0, 0, .26), 0 2px 10px rgba(0, 0, 0, .16); }
.side-card { padding: 0 18px 40px 17px; }
.main-card { padding: 0 24px 96px; }
.banner {
  position: relative;
  margin: -20px 0 0;
  color: #fff;
  text-align: center;
  border-radius: 4px;
  box-shadow: 0 5px 11px rgba(0, 0, 0, .2), 0 4px 15px rgba(0, 0, 0, .16);
}
.banner-pink { height: 91px; padding-top: 26px; background: linear-gradient(45deg, #ff00bb, #ff00c8 22%, #9000ff); }
.banner-blue { height: 89px; font: 300 32px/91px Roboto, sans-serif; background: linear-gradient(45deg, #38bdff, #4600b4 76%, #50009b); }
.hint { margin: 44px 0 16px; text-align: center; }
.chips { display: flex; flex-wrap: wrap; gap: 16px; padding: 0 12px 0 3px; margin-bottom: -4px; }
.chip {
  height: 32px;
  padding: 0 21px 0 31px;
  border-radius: 16px;
  background: #eceff1;
  color: #70757a;
  font-size: 12px;
  line-height: 32px;
  font-weight: 500;
}
.report { display: grid; grid-template-columns: minmax(0, 1fr) minmax(0, 1fr); gap: 26px; margin: 0 56px 0 1px; }
.dates { margin: 56px 0 0 -5px; }
.field { margin-bottom: 56px; }
.field label { display: block; font-size: 13px; line-height: 16px; font-weight: 300; color: #757575; }
.field input {
  display: block;
  width: 166px;
  height: 33px;
  margin-left: 7px;
  padding: 0 0 6px;
  border: 0;
  border-bottom: 1px solid #ced4da;
  color: #495057;
}
.response h2 { margin: 0 0 24px; font-size: 32px; line-height: 38px; font-weight: 300; text-align: center; }
.chart { width: 528px; max-width: 100%; margin: 0 auto; }
.tick { font: 12px "Liberation Sans", sans-serif; fill: #666; }
.end { text-anchor: end; }
.bulk { display: flex; flex-direction: column; align-items: flex-end; gap: 12px; margin: 34px 30px 0 0; }
.btn {
  flex: none;
  width: 110px;
  height: 46px;
  padding: 0 34px;
  border-radius: 2px;
  background: #6736f5;
  color: #fff;
  font-size: 13px;
  line-height: 20px;
  text-align: right;
  white-space: nowrap;
  box-shadow: 0 2px 5px rgba(0, 0, 0, .16), 0 2px 10px rgba(0, 0, 0, .12);
}
.wide { width: 142px; }
.search {
  display: block;
  width: calc(100% - 176px);
  height: 38px;
  margin: 33px 0 31px 88px;
  padding: 0;
  border: 0;
  border-bottom: 1px solid #ced4da;
}
.search::placeholder { color: #757b80; }
.length { display: flex; align-items: center; gap: 4px; height: 24px; margin-bottom: 8px; }
.select { position: relative; }
.select select {
  display: block;
  appearance: none;
  width: 40px;
  height: 24px;
  padding: 0 5px;
  border: 1px solid #a0a0a0;
  border-radius: 1px;
  background: linear-gradient(#f8f8f8, #dcdcdc);
  color: #000;
}
.select svg { position: absolute; right: 6px; top: 8px; pointer-events: none; }
.data { width: 100%; table-layout: fixed; border-collapse: separate; border-spacing: 0; }
.c-id { width: 134px; }
.c-title { width: 179px; }
.c-type { width: 184px; }
.c-publish { width: 234px; }
.c-status { width: 217px; }
.data th { padding: 10px 6px 11px 18px; border-bottom: 1px solid #111; text-align: left; font-weight: 700; }
.th { display: flex; align-items: center; justify-content: space-between; }
.th svg { fill: #dcdcdc; }
.th .sorted { fill: #8347dc; overflow: visible; }
.data td { height: 74px; padding: 8px 10px; }
.data tbody tr:nth-child(odd) { background: #f1f1f1; }
.actions { display: flex; align-items: flex-start; gap: 12px; height: 58px; }
.actions .btn { margin-top: 6px; }
.count { width: 20px; }
```
